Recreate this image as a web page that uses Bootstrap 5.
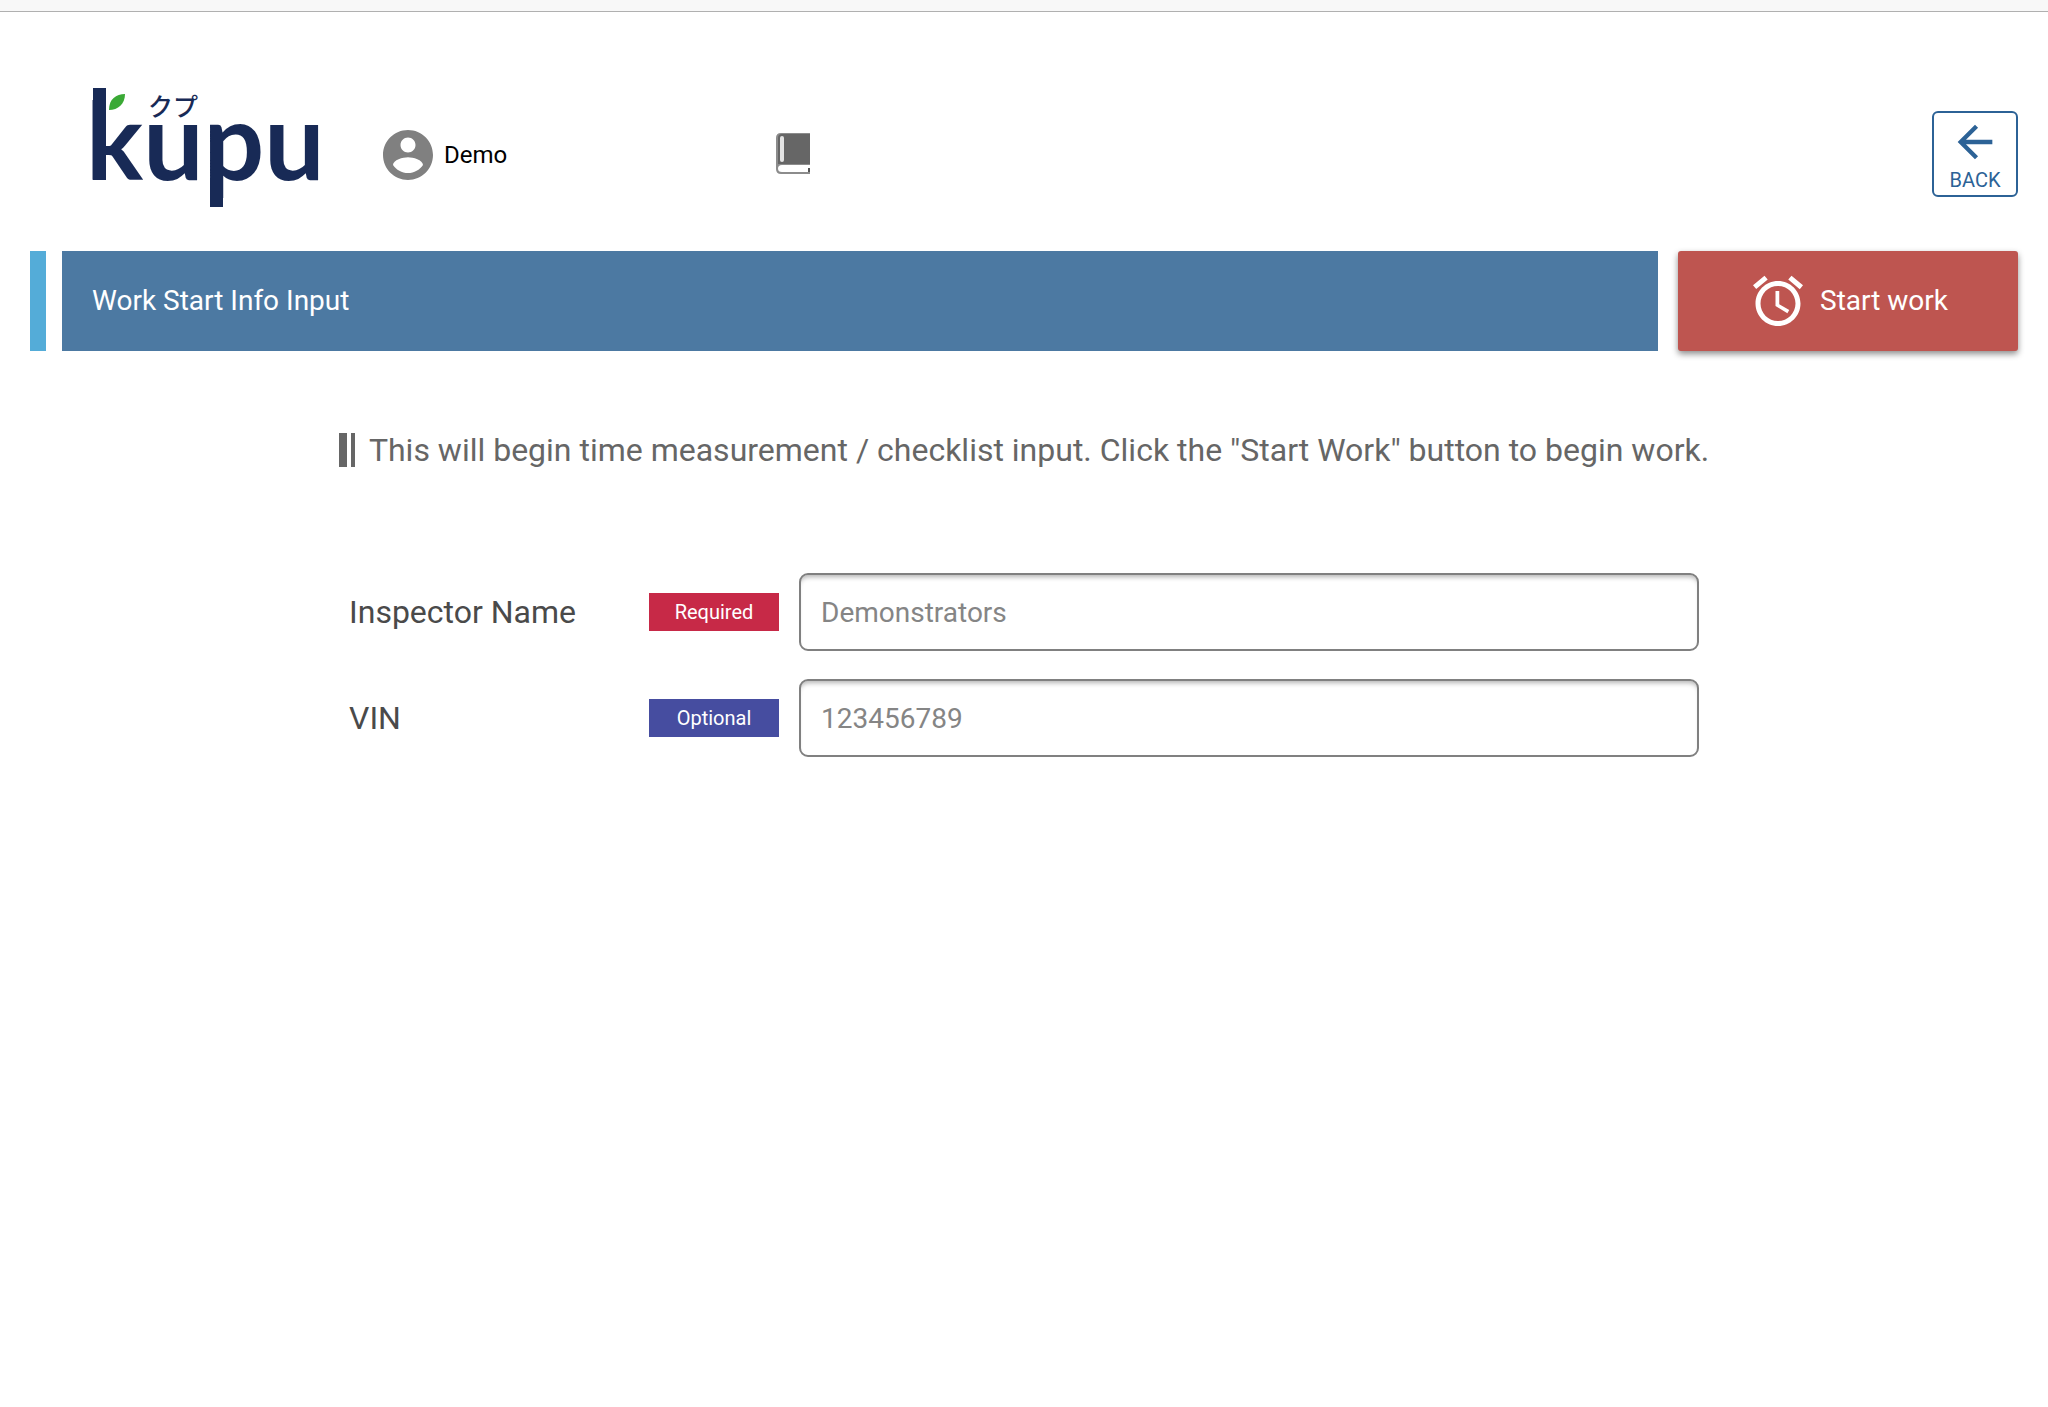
<!DOCTYPE html>
<html lang="en">
<head>
<meta charset="utf-8">
<meta name="viewport" content="width=device-width, initial-scale=1">
<title>Work Start Info Input</title>
<link rel="stylesheet" href="https://cdn.jsdelivr.net/npm/bootstrap@5.3.0/dist/css/bootstrap.min.css">
<style>
body { font-family: Roboto, "Noto Sans CJK JP", sans-serif; font-size: 28px; line-height: 40px; color: #000; background: #fff; }
.top-strip { height: 12px; background: #f8f8f8; border-bottom: 1px solid #b0b0b0; }
.page-head { height: 239px; padding: 48px 30px 0 80px; align-items: flex-start; }
.logo { width: 260px; height: 170px; margin-right: 38px; }
.head-item { height: 60px; margin-top: 65px; }
.user-box { width: 397px; font-size: 24px; gap: 6px; }
.back-btn { width: 86px; height: 86px; margin-top: 51px; border: 2px solid #2c6296; border-radius: 6px; color: #2c6296; font-size: 20px; line-height: 24px; padding: 3px 0 0; }
.back-btn:hover { background: #eef4fa; color: #2c6296; }
.title-row { padding: 0 30px; }
.accent-bar { width: 16px; margin-right: 16px; background: #54acd8; }
.title-bar { min-height: 100px; padding: 0 30px; background: #4c79a2; margin-right: 20px; }
.title-bar h1 { font-size: 28px; line-height: 40px; font-weight: 400; }
.start-btn { width: 340px; background: #be5550; border-radius: 3px; color: #fff; font-size: 28px; gap: 12px; box-shadow: 0 3px 6px rgba(0,0,0,.45); }
.start-btn:hover { background: #ab4843; color: #fff; }
.message { font-size: 32px; color: #666; margin: 79px 0 0; gap: 14px; }
.work-form { max-width: 1350px; margin: 103px auto 0; gap: 28px; }
.field-label { width: 300px; font-size: 32px; color: #4a4a4a; }
.tag { width: 130px; height: 38px; font-size: 20px; line-height: 38px; color: #fff; margin-right: 20px; }
.tag-required { background: #c72947; }
.tag-optional { background: #464da0; }
.field-box { height: 78px; border: 2px solid #808080; border-radius: 9px; font-size: 28px; padding: 0 20px; color: #555; box-shadow: inset 0 5px 5px -3px rgba(0,0,0,.3); }
.field-box::placeholder { color: #858585; }
</style>
</head>
<body>
<div class="top-strip"></div>
<header class="page-head d-flex">
  <svg class="logo flex-shrink-0" viewBox="-10 0 260 170" role="img" aria-label="kupu">
    <text x="-4" y="120" font-family="Lato, sans-serif" font-weight="700" font-size="107" fill="#182a56">kupu</text>
    <rect x="3" y="28" width="13" height="92" fill="#182a56"/>
    <rect x="120" y="120" width="13" height="27" fill="#182a56"/>
    <path d="M19 50C19 39 26 34 35 34C35 44 28 50 19 50Z" fill="#3aa935"/>
    <text x="58" y="56" font-family="Noto Sans CJK JP, sans-serif" font-weight="500" font-size="25" fill="#182a56">クプ</text>
  </svg>
  <div class="head-item user-box d-flex align-items-center">
    <svg width="60" height="60" viewBox="0 0 24 24" fill="#808080"><path d="M12 2C6.480 2 2 6.480 2 12s4.480 10 10 10 10-4.480 10-10S17.520 2 12 2zm0 3c1.660 0 3 1.340 3 3s-1.340 3-3 3-3-1.340-3-3 1.340-3 3-3zm0 14.200c-2.500 0-4.710-1.280-6-3.220.03-1.990 4-3.080 6-3.080 1.990 0 5.970 1.090 6 3.080-1.290 1.940-3.500 3.220-6 3.220z"/></svg>
    <span>Demo</span>
  </div>
  <div class="head-item d-flex align-items-center">
    <svg width="36" height="44" viewBox="0 1 36 44"><path d="M6 1H35V42H6Q1 42 1 37V6Q1 1 6 1Z" fill="#8c8c8c"/><path d="M7 2H35V32H3V6Q3 2 7 2Z" fill="#666"/><rect x="5" y="4" width="4" height="26" rx="2" fill="#e4e4e4"/><path d="M7 33H35V36L33 37V40H7Q3 40 3 36.500Q3 33 7 33Z" fill="#fff"/><rect x="33" y="36" width="2" height="4" fill="#555"/></svg>
  </div>
  <button type="button" class="btn back-btn ms-auto d-flex flex-column align-items-center">
    <svg width="52" height="52" viewBox="0 0 24 24" fill="currentColor"><path d="M20 11H7.830l5.590-5.590L12 4l-8 8 8 8 1.410-1.410L7.830 13H20v-2z"/></svg>
    <span>BACK</span>
  </button>
</header>
<main>
  <div class="title-row d-flex">
    <div class="accent-bar"></div>
    <div class="title-bar flex-grow-1 d-flex align-items-center text-white"><h1 class="m-0">Work Start Info Input</h1></div>
    <button type="submit" form="work-form" class="btn start-btn border-0 d-flex align-items-center justify-content-center">
      <svg width="60" height="60" viewBox="0 0 24 24" fill="currentColor"><path d="M22 5.720l-4.600-3.860-1.290 1.530 4.600 3.860L22 5.720zM7.880 3.390L6.600 1.860 2 5.710l1.290 1.530 4.590-3.850zM12.500 8H11v6l4.750 2.850.75-1.230-4-2.370V8zM12 4c-4.970 0-9 4.030-9 9s4.020 9 9 9c4.970 0 9-4.030 9-9s-4.030-9-9-9zm0 16c-3.870 0-7-3.130-7-7s3.130-7 7-7 7 3.130 7 7-3.130 7-7 7z"/></svg>
      <span>Start work</span>
    </button>
  </div>
  <p class="message d-flex justify-content-center align-items-center">
    <svg width="16" height="34" viewBox="0 0 16 34" fill="#666"><rect width="8" height="34"/><rect x="12" width="4" height="34"/></svg>
    <span>This will begin time measurement / checklist input. Click the "Start Work" button to begin work.</span>
  </p>
  <form id="work-form" class="work-form d-flex flex-column">
    <div class="d-flex align-items-center">
      <label class="field-label" for="inspector">Inspector Name</label>
      <span class="tag tag-required text-center">Required</span>
      <input id="inspector" type="text" class="form-control field-box flex-fill w-auto" placeholder="Demonstrators">
    </div>
    <div class="d-flex align-items-center">
      <label class="field-label" for="vin">VIN</label>
      <span class="tag tag-optional text-center">Optional</span>
      <input id="vin" type="text" class="form-control field-box flex-fill w-auto" placeholder="123456789">
    </div>
  </form>
</main>
<script src="https://cdn.jsdelivr.net/npm/bootstrap@5.3.0/dist/js/bootstrap.bundle.min.js"></script>
</body>
</html>
